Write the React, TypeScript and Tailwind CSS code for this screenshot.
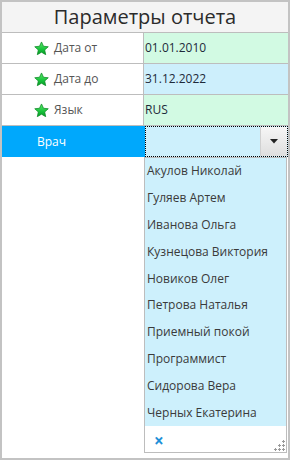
import React from "react";

const doctors = [
  "Акулов Николай",
  "Гуляев Артем",
  "Иванова Ольга",
  "Кузнецова Виктория",
  "Новиков Олег",
  "Петрова Наталья",
  "Приемный покой",
  "Программист",
  "Сидорова Вера",
  "Черных Екатерина",
];

const params = [
  { label: "Дата от", value: "01.01.2010", bg: "bg-[#d2fae3]" },
  { label: "Дата до", value: "31.12.2022", bg: "bg-[#cdeffc]" },
  { label: "Язык", value: "RUS", bg: "bg-[#d2fae3]" },
];

function Star() {
  return (
    <svg width="15" height="15" viewBox="0 0 24 24" className="shrink-0">
      <defs>
        <linearGradient id="starFill" x1="0" y1="0" x2="0" y2="1">
          <stop offset="0" stopColor="#5ee86a" />
          <stop offset="0.6" stopColor="#16c23a" />
          <stop offset="1" stopColor="#0a9a2a" />
        </linearGradient>
      </defs>
      <polygon
        points="12,1.5 15.2,8.4 22.8,9.2 17.1,14.3 18.7,21.8 12,17.9 5.3,21.8 6.9,14.3 1.2,9.2 8.8,8.4"
        fill="url(#starFill)"
        stroke="#0b8a24"
        strokeWidth="1.2"
        strokeLinejoin="round"
      />
    </svg>
  );
}

function Grip() {
  const dots = [
    [8, 0],
    [4, 4],
    [8, 4],
    [0, 8],
    [4, 8],
    [8, 8],
  ];
  return (
    <svg width="11" height="11" viewBox="0 0 11 11">
      {dots.map(([x, y], i) => (
        <g key={i} fill="#9a9a9a">
          <rect x={x + 1} y={y} width="1" height="3" />
          <rect x={x} y={y + 1} width="3" height="1" />
        </g>
      ))}
    </svg>
  );
}

export default function App() {
  return (
    <div className="flex h-[460px] w-[290px] flex-col border-2 border-[#c3c3c3] bg-white font-['Open_Sans',sans-serif] text-[12px]">
      <div className="flex h-[31px] shrink-0 items-center justify-center border-b border-[#bdbdbd] bg-[#f4f4f4] text-[20px] leading-none text-[#2b2b2b]">
        Параметры отчета
      </div>

      {params.map((p) => (
        <div key={p.label} className="flex h-[31px] shrink-0 border-b border-[#bdbdbd]">
          <div className="flex w-[142px] items-center gap-[5px] border-r border-[#bdbdbd] pl-[32px] text-[#555]">
            <Star />
            <span>{p.label}</span>
          </div>
          <div className={`flex flex-1 items-center pl-[1px] text-[#1e2a3a] ${p.bg}`}>
            {p.value}
          </div>
        </div>
      ))}

      <div className="flex h-[31px] shrink-0">
        <div className="flex w-[143px] items-center bg-[#00a8fc] pl-[35px] text-white">
          Врач
        </div>
        <div className="flex flex-1 border border-dotted border-black bg-[#cdf0fc]">
          <div className="flex-1" />
          <div className="flex w-[27px] items-center justify-center border-l border-[#d0d0d0] bg-[linear-gradient(180deg,#f6f6f6,#dedede)]">
            <svg width="8" height="5" viewBox="0 0 8 5">
              <polygon points="0,0 8,0 4,4.5" fill="#222" />
            </svg>
          </div>
        </div>
      </div>

      <div className="flex flex-1">
        <div className="w-[142px]" />
        <div className="mb-[5px] mr-[1px] flex w-[143px] flex-col border border-[#bdbdbd]">
          <div className="flex flex-col bg-[#cdf0fc]">
            {doctors.map((d) => (
              <div key={d} className="flex h-[26.8px] items-center pl-[2px] text-[#3a3a3a]">
                {d}
              </div>
            ))}
          </div>
          <div className="relative flex flex-1 items-center bg-white pl-[9px] pt-[3px]">
            <span className="text-[17px] font-bold leading-none text-[#1e90d8]">×</span>
            <div className="absolute bottom-[1px] right-[1px]">
              <Grip />
            </div>
          </div>
        </div>
      </div>
    </div>
  );
}
